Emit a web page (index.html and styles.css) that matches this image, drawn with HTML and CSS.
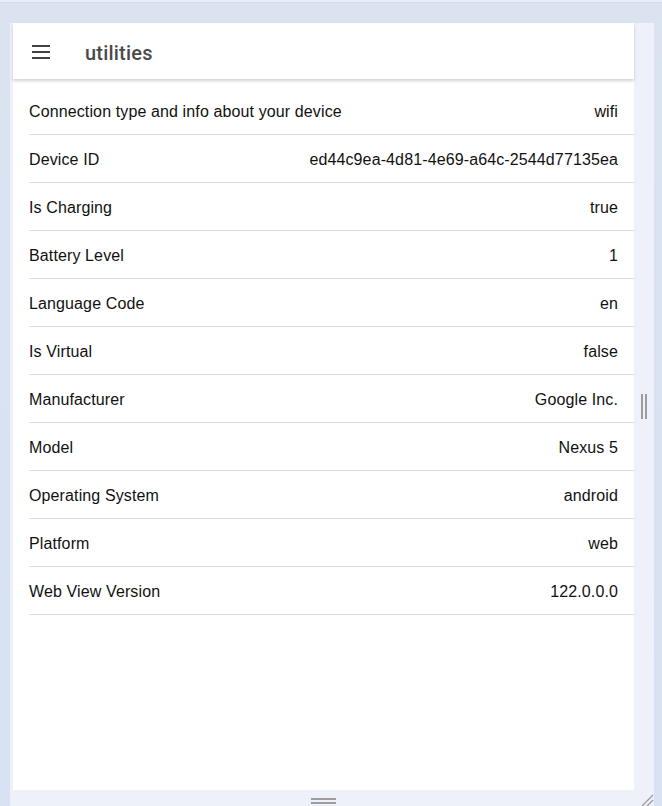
FILE: index.html
```html
<!DOCTYPE html>
<html>
<head>
<meta charset="utf-8">
<link rel="stylesheet" href="styles.css">
</head>
<body>
<div class="topbar"></div>
<div class="frame">
  <div class="main">
    <div class="card">
      <header class="toolbar">
        <span class="menu">
          <svg width="18" height="14" viewBox="0 0 18 14"><rect x="0" y="0" width="18" height="2" fill="#424242"/><rect x="0" y="6" width="18" height="2" fill="#424242"/><rect x="0" y="12" width="18" height="2" fill="#424242"/></svg>
        </span>
        <span class="title">utilities</span>
      </header>
      <div class="list">
        <div class="row"><span>Connection type and info about your device</span><span>wifi</span></div>
        <div class="row"><span>Device ID</span><span>ed44c9ea-4d81-4e69-a64c-2544d77135ea</span></div>
        <div class="row"><span>Is Charging</span><span>true</span></div>
        <div class="row"><span>Battery Level</span><span>1</span></div>
        <div class="row"><span>Language Code</span><span>en</span></div>
        <div class="row"><span>Is Virtual</span><span>false</span></div>
        <div class="row"><span>Manufacturer</span><span>Google Inc.</span></div>
        <div class="row"><span>Model</span><span>Nexus 5</span></div>
        <div class="row"><span>Operating System</span><span>android</span></div>
        <div class="row"><span>Platform</span><span>web</span></div>
        <div class="row"><span>Web View Version</span><span>122.0.0.0</span></div>
      </div>
    </div>
    <div class="side"><span class="vhandle"></span></div>
  </div>
  <div class="bottom"><span class="hhandle"></span></div>
  <svg class="corner" width="14" height="12" viewBox="0 0 14 12"><path d="M2 12 L13 1 M7 12 L13 6" stroke="#9a9a9a" stroke-width="1.3" fill="none"/></svg>
</div>
</body>
</html>
```

FILE: styles.css
```css
html, body {
  margin: 0;
  padding: 0;
}
body {
  width: 662px;
  height: 806px;
  overflow: hidden;
  background: linear-gradient(180deg, #dbe3f1 0%, #d9e2f2 100%);
  font-family: "Liberation Sans", Arial, sans-serif;
}
.topbar {
  height: 2px;
  background: #e7eef9;
  border-bottom: 1px solid #d2ddf1;
}
.frame {
  position: relative;
  margin-top: 20px;
  margin-left: 10px;
  width: 644px;
  height: 783px;
  background: #eef1f9;
  display: flex;
  flex-direction: column;
}
.main {
  display: flex;
  height: 767px;
}
.card {
  margin-left: 3px;
  width: 621px;
  height: 767px;
  background: #ffffff;
  display: flex;
  flex-direction: column;
}
.side {
  flex: 1;
  display: flex;
  align-items: center;
  justify-content: center;
}
.vhandle {
  width: 2px;
  height: 25px;
  border-left: 2px solid #9c9c9c;
  border-right: 2px solid #9c9c9c;
  box-sizing: content-box;
}
.bottom {
  width: 627px;
  height: 16px;
  display: flex;
  justify-content: center;
  align-items: flex-start;
}
.hhandle {
  margin-top: 8px;
  width: 25px;
  height: 2px;
  border-top: 2px solid #9c9c9c;
  border-bottom: 2px solid #9c9c9c;
  box-sizing: content-box;
}
.corner {
  position: absolute;
  right: 0;
  bottom: 0;
}
.toolbar {
  height: 56px;
  display: flex;
  align-items: center;
  box-shadow: 0 2px 3px rgba(0, 0, 0, 0.18);
  position: relative;
  z-index: 1;
  flex: none;
}
.menu {
  width: 18px;
  height: 14px;
  margin-left: 19px;
  margin-top: 1px;
  display: flex;
}
.title {
  margin-left: 35px;
  font-family: Roboto, "Noto Sans", sans-serif;
  font-size: 20px;
  font-weight: 500;
  letter-spacing: 0.2px;
  color: #4a4a4a;
  margin-top: 4px;
}
.list {
  padding-top: 8px;
}
.row {
  box-sizing: border-box;
  margin-left: 16px;
  padding-right: 16px;
  padding-top: 2px;
  height: 48px;
  border-bottom: 1px solid #dedede;
  display: flex;
  justify-content: space-between;
  align-items: center;
  font-size: 16px;
  letter-spacing: 0.12px;
  color: #111;
}
```
